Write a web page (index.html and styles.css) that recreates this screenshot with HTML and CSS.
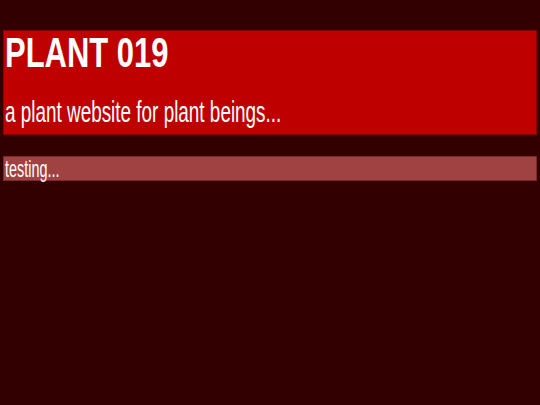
FILE: index.html
```html
<!DOCTYPE html>
<html lang="en">
<head>
<meta charset="utf-8">
<title>PLANT 019</title>
<link rel="stylesheet" href="styles.css">
</head>
<body>
<header class="banner">
  <h1 class="title"><span class="squeeze">PLANT 019</span></h1>
  <p class="tagline"><span class="squeeze">a plant website for plant beings...</span></p>
</header>
<div class="note"><span class="squeeze">testing...</span></div>
</body>
</html>
```

FILE: styles.css
```css
html, body {
  margin: 0;
  padding: 0;
}
body {
  background: #330000;
  color: #ffffff;
  font-family: "Liberation Sans", Arial, sans-serif;
  width: 540px;
  height: 405px;
  padding-top: 30px;
  box-sizing: border-box;
}
.squeeze {
  display: inline-block;
  transform: scaleX(0.63);
  transform-origin: 0 50%;
  white-space: nowrap;
}
.banner {
  margin: 0 3px;
  background: #bf0000;
  border: 1px solid #8a0000;
  height: 105px;
  box-sizing: border-box;
  padding: 0 1px;
  display: flex;
  flex-direction: column;
}
.title {
  margin: 0;
  font-size: 43px;
  line-height: 43px;
  font-weight: bold;
}
.title .squeeze {
  transform: scaleX(0.72);
}
.tagline {
  margin: 23px 0 0;
  font-size: 30px;
  line-height: 30px;
}
.note {
  margin: 21px 3px 0;
  background: #a04242;
  border: 1px solid #7a2a2a;
  height: 25px;
  box-sizing: border-box;
  padding: 0 1px;
  font-size: 24px;
  line-height: 23px;
}
.note .squeeze {
  transform: scaleX(0.6);
}
```
